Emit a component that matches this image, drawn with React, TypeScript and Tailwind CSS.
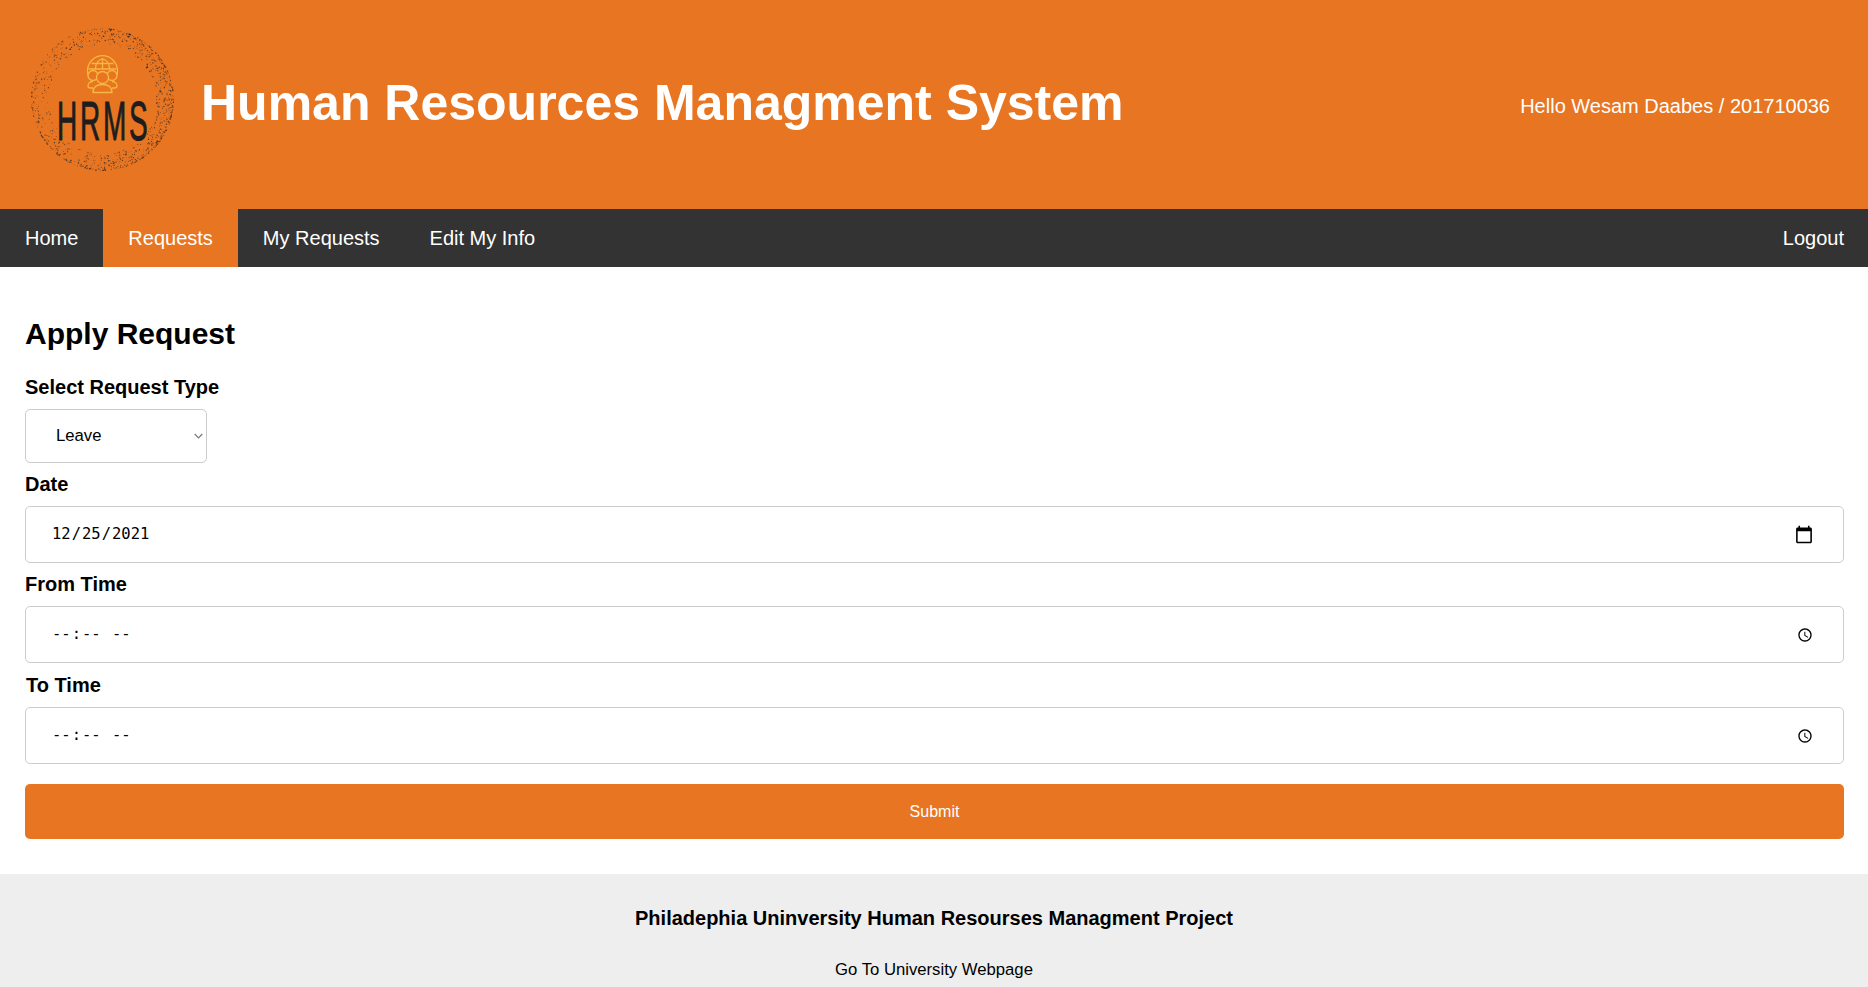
import React from 'react';

// speckled ring round the logo, seeded so every render gives the same dots
function ringDots() {
  const dots: { x: number; y: number; r: number; o: number }[] = [];
  let seed = 7;
  const rnd = () => {
    seed = (seed * 16807) % 2147483647;
    return seed / 2147483647;
  };
  for (let i = 0; i < 1700; i++) {
    const a = rnd() * Math.PI * 2;
    const d = 71 - Math.pow(rnd(), 2) * 17;
    const heavy = Math.cos(a - 0.2) * 0.25 + 0.65;
    if (rnd() > heavy) continue;
    dots.push({
      x: 72.5 + Math.cos(a) * d,
      y: 71.5 + Math.sin(a) * d,
      r: 0.3 + rnd() * 0.45,
      o: 0.35 + rnd() * 0.5,
    });
  }
  return dots;
}

function Logo() {
  const dots = ringDots();
  return (
    <svg width="144" height="144" viewBox="0 0 144 144" className="shrink-0">
      {dots.map((d, i) => (
        <circle key={i} cx={d.x} cy={d.y} r={d.r} fill="#26262a" opacity={d.o} />
      ))}
      {/* globe with people */}
      <g fill="none" stroke="#f5b840" strokeWidth="1.300">
        <path d="M60 51a15 15 0 1 1 25 0" />
        <path d="M72.500 30.500v10M58.500 41h28M61.500 35.500h22M72.500 30.500c-5 2-7 6-7 10M72.500 30.500c5 2 7 6 7 10" />
        <circle cx="63" cy="47.500" r="5" fill="#e87521" />
        <circle cx="82" cy="47.500" r="5" fill="#e87521" />
        <circle cx="72.500" cy="49.500" r="6" fill="#e87521" />
        <path d="M63 60h-2.500c-2 0-2.500-1-2.500-2 0-2.500 2-4.500 5-4.500M82 60h2.500c2 0 2.500-1 2.500-2 0-2.500-2-4.500-5-4.500" />
        <path d="M63 64.500c0-6 4-8 9.500-8s9.500 2 9.500 8z" fill="#e87521" />
      </g>
      <text
        transform="translate(27 111.500) scale(0.5 1)"
        fill="#1d1d20"
        stroke="#1d1d20"
        strokeWidth="1"
        fontSize="56"
        letterSpacing="5.500"
        fontFamily="'Liberation Sans', sans-serif"
      >
        HRMS
      </text>
    </svg>
  );
}

const fieldClass =
  'block w-full h-[57px] pl-[25px] pr-[25px] pt-px border border-[#ccc] rounded-[5px] bg-white text-[15.500px] text-black font-["DejaVu_Sans_Mono",monospace]';
const labelClass = 'block text-[20px] font-bold leading-[23px] mt-[10px] mb-[10px]';

export default function App() {
  return (
    <div className="h-screen overflow-hidden bg-white text-black font-['Liberation_Sans',Arial,sans-serif]">
      {/* Header */}
      <div className="h-[209px] bg-[#e87521] flex items-center justify-between pl-[30px] pr-[38px] text-white">
        <div className="flex items-center gap-[27px] -mt-[10px]">
          <Logo />
          <h1 className="text-[50px] font-bold leading-none mt-[6px]">Human Resources Managment System</h1>
        </div>
        <div className="text-[20px] leading-none mt-[2px]">Hello Wesam Daabes / 201710036</div>
      </div>

      {/* Nav */}
      <div className="h-[58px] bg-[#333] flex text-[20px] text-white pr-[24px]">
        <a className="px-[25px] flex items-center">Home</a>
        <a className="px-[25px] flex items-center bg-[#e87521]">Requests</a>
        <a className="px-[25px] flex items-center">My Requests</a>
        <a className="px-[25px] flex items-center">Edit My Info</a>
        <a className="flex items-center ml-auto">Logout</a>
      </div>

      {/* Form */}
      <div className="pl-[25px] pr-[24px] pt-[48px] pb-[35px]">
        <h2 className="text-[30px] font-bold leading-[37px]">Apply Request</h2>
        <label className="block text-[20px] font-bold leading-[23px] mt-[24px] mb-[10px]">Select Request Type</label>
        <div className="relative w-[182px]">
          <select className="block w-full h-[54px] pl-[30px] border border-[#ccc] rounded-[5px] bg-white text-[16.700px] appearance-none" defaultValue="Leave">
            <option>Leave</option>
            <option>Permission</option>
          </select>
          <svg className="absolute right-[4px] top-[24px] pointer-events-none" width="9" height="6" viewBox="0 0 9 6">
            <path d="M0.700 1l3.800 3.800L8.300 1" fill="none" stroke="#777" strokeWidth="1.200" />
          </svg>
        </div>
        <label className={labelClass}>Date</label>
        <input
          type="date"
          defaultValue="2021-12-25"
          className={fieldClass + ' [&::-webkit-calendar-picker-indicator]:w-[20px] [&::-webkit-calendar-picker-indicator]:h-[20px] [&::-webkit-calendar-picker-indicator]:mr-[2px]'}
        />
        <label className={labelClass}>From Time</label>
        <input type="time" className={fieldClass + ' [&::-webkit-calendar-picker-indicator]:mr-[2px]'} />
        <label className="block text-[20px] font-bold leading-[23px] mt-[11px] mb-[10px] pl-px">To Time</label>
        <input type="time" className={fieldClass + ' [&::-webkit-calendar-picker-indicator]:mr-[2px]'} />
        <button className="block w-full h-[55px] mt-[20px] bg-[#e87521] text-white text-[16px] rounded-[5px]">Submit</button>
      </div>

      {/* Footer */}
      <div className="bg-[#eee] text-center pt-[33px] h-[114px]">
        <div className="text-[20px] font-bold leading-[23px]">Philadephia Uninversity Human Resourses Managment Project</div>
        <a className="block text-[16.700px] leading-[18px] mt-[31px]">Go To University Webpage</a>
      </div>
    </div>
  );
}
